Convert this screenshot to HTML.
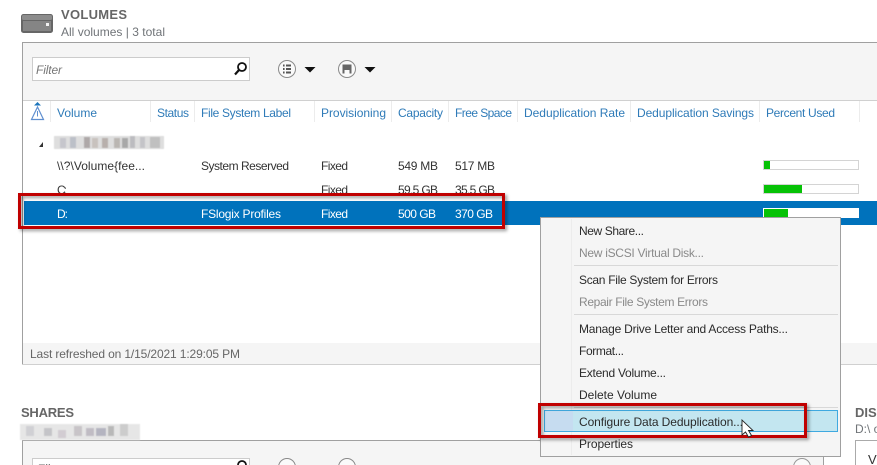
<!DOCTYPE html>
<html><head><meta charset="utf-8"><style>
html,body{margin:0;padding:0;background:#fff}
svg{display:block}
text{font-family:"Liberation Sans",sans-serif;font-size:12px;fill:#333}
.h text,text.h{fill:#2f7bb8}
.m text{fill:#2b2b2b}
</style></head><body>
<svg width="877" height="465" viewBox="0 0 877 465" xmlns="http://www.w3.org/2000/svg" style="width:877px;height:465px;overflow:hidden">
<defs>
<filter id="s" x="-5%" y="-20%" width="110%" height="150%"><feDropShadow dx="2" dy="2" stdDeviation="1.5" flood-color="#000" flood-opacity=".4"/></filter>
<filter id="b"><feGaussianBlur stdDeviation=".6"/></filter>
</defs>
<rect width="877" height="465" fill="#fff"/>

<!-- drive icon -->
<rect x="21" y="14" width="32" height="19" rx="2.5" fill="#666"/>
<rect x="22" y="15" width="30" height="5" rx="1.5" fill="#8c8c8c"/>
<rect x="23" y="21" width="28" height="10" fill="#858585"/>
<rect x="46" y="23" width="3" height="3" fill="#f2f2f2"/>

<text x="61" y="19" font-weight="bold" style="font-size:13px;fill:#666" textLength="66">VOLUMES</text>
<text x="61" y="36" style="fill:#707478" textLength="104">All volumes | 3 total</text>

<!-- volumes panel -->
<rect x="22.5" y="42.5" width="900" height="321.5" fill="#fff" stroke="#a0a0a0"/>
<rect x="23" y="43" width="854" height="57" fill="#f5f5f5"/>
<rect x="23" y="100" width="854" height="1" fill="#d0d0d0"/>
<rect x="23" y="343" width="854" height="21" fill="#f5f5f5"/>
<rect x="32.5" y="57.5" width="217" height="23" fill="#fff" stroke="#ccc"/>
<text x="36" y="74" font-style="italic" style="fill:#777" textLength="26">Filter</text>
<circle cx="242" cy="67" r="4" fill="none" stroke="#111" stroke-width="1.8"/>
<path d="M239 70L235 74.5" stroke="#111" stroke-width="2.2" fill="none"/>
<circle cx="287" cy="69" r="8.5" fill="#fafafa" stroke="#8a8a8a"/>
<path d="M283 65.5h1.6M283 69h1.6M283 72.5h1.6M286 65.5h5M286 69h5M286 72.5h5" stroke="#555" stroke-width="2" fill="none"/>
<path d="M304.5 67h11l-5.500 5.500z" fill="#111"/>
<circle cx="347" cy="69" r="8.5" fill="#fafafa" stroke="#8a8a8a"/>
<path d="M342.500 64.500h9v9h-2v-3.500h-5v3.500h-2z" fill="#666"/>
<path d="M364.500 67h11l-5.500 5.500z" fill="#111"/>

<!-- header -->
<path d="M37.500 102l3.500 3.500h-7z" fill="#1c75bc"/>
<path d="M37.500 107L31.500 119.500h12z" fill="none" stroke="#5f8fd0" stroke-width="1.200"/>
<path d="M37.500 111v5.500" stroke="#5f8fd0" stroke-width="1"/>
<path d="M50.500 101v21M150.500 101v21M194.500 101v21M314.500 101v21M391.500 101v21M448.500 101v21M517.500 101v21M630.500 101v21M759.500 101v21M859.500 101v21" stroke="#ececec"/>
<g class="h">
<text x="57" y="117" textLength="40">Volume</text>
<text x="157" y="117" textLength="32">Status</text>
<text x="201" y="117" textLength="90">File System Label</text>
<text x="321" y="117" textLength="65">Provisioning</text>
<text x="398" y="117" textLength="45">Capacity</text>
<text x="455" y="117" textLength="57">Free Space</text>
<text x="524" y="117" textLength="101">Deduplication Rate</text>
<text x="637" y="117" textLength="117">Deduplication Savings</text>
<text x="766" y="117" textLength="69">Percent Used</text>
</g>

<!-- group blurred -->
<path d="M39 147l4-5v5z" fill="#333"/>
<g filter="url(#b)">
<rect x="54" y="136" width="110" height="13" fill="#dedede"/>
<rect x="60" y="138" width="6" height="10" fill="#c6c6cc"/><rect x="70" y="137" width="6" height="11" fill="#bcc0c8"/>
<rect x="84" y="137" width="6" height="11" fill="#aea8a8"/><rect x="92" y="138" width="6" height="10" fill="#c8c2be"/>
<rect x="102" y="138" width="6" height="10" fill="#b8b0ac"/><rect x="114" y="138" width="6" height="10" fill="#bab6b2"/>
<rect x="122" y="138" width="6" height="10" fill="#a8a8a8"/><rect x="130" y="136" width="5" height="12" fill="#bcbcc0"/>
<rect x="140" y="137" width="5" height="11" fill="#c4c4c8"/><rect x="150" y="137" width="10" height="11" fill="#c0c0c0"/>
</g>

<!-- rows -->
<text x="57" y="170" textLength="88">\\?\Volume{fee...</text>
<text x="201" y="170" textLength="88">System Reserved</text>
<text x="321" y="170" textLength="27">Fixed</text>
<text x="398" y="170" textLength="40">549 MB</text>
<text x="455" y="170" textLength="40">517 MB</text>
<rect x="763.500" y="160.500" width="95" height="9" fill="#fff" stroke="#d4d4d4"/>
<rect x="764" y="161" width="6" height="8" fill="#06c206"/>

<text x="57" y="194" textLength="10">C:</text>
<text x="321" y="194" textLength="27">Fixed</text>
<text x="398" y="194" textLength="40">59.5 GB</text>
<text x="455" y="194" textLength="40">35.5 GB</text>
<rect x="763.500" y="184.500" width="95" height="9" fill="#fff" stroke="#d4d4d4"/>
<rect x="764" y="185" width="38" height="8" fill="#06c206"/>

<rect x="24" y="201" width="853" height="24" fill="#0072bc"/>
<text x="57" y="218" style="fill:#fff" textLength="11">D:</text>
<text x="201" y="218" style="fill:#fff" textLength="80">FSlogix Profiles</text>
<text x="321" y="218" style="fill:#fff" textLength="27">Fixed</text>
<text x="398" y="218" style="fill:#fff" textLength="38">500 GB</text>
<text x="455" y="218" style="fill:#fff" textLength="38">370 GB</text>
<rect x="763" y="208" width="96" height="10" fill="#fff"/>
<rect x="764" y="209" width="24" height="9" fill="#06c206"/>

<text x="30" y="358" style="fill:#666" textLength="210">Last refreshed on 1/15/2021 1:29:05 PM</text>

<!-- shares -->
<text x="21" y="417" font-weight="bold" style="font-size:13px;fill:#666" textLength="53">SHARES</text>
<path d="M22.500 465V440.500H823.500V465" fill="#fff" stroke="#a0a0a0"/>
<rect x="23" y="441" width="800" height="24" fill="#f5f5f5"/>
<g filter="url(#b)">
<rect x="20" y="424" width="120" height="16" fill="#e6e6e6"/>
<rect x="26" y="426" width="8" height="10" fill="#d0d0d4"/><rect x="44" y="428" width="8" height="8" fill="#c4c4c8"/>
<rect x="58" y="430" width="8" height="8" fill="#d2ccd2"/><rect x="74" y="426" width="8" height="10" fill="#c8c4c8"/>
<rect x="86" y="428" width="8" height="8" fill="#c0bcc4"/><rect x="96" y="428" width="10" height="8" fill="#b4b4c0"/>
<rect x="108" y="426" width="6" height="10" fill="#b8b8b8"/><rect x="120" y="424" width="8" height="12" fill="#cccccc"/>
</g>
<rect x="32.500" y="458.500" width="217" height="20" fill="#fff" stroke="#ccc"/>
<text x="37" y="473" font-style="italic" style="fill:#666">Filter</text>
<circle cx="242" cy="465" r="4" fill="none" stroke="#111" stroke-width="1.800"/>
<circle cx="287" cy="467" r="8.500" fill="#fafafa" stroke="#8a8a8a"/>
<circle cx="347" cy="467" r="8.500" fill="#fafafa" stroke="#8a8a8a"/>
<circle cx="802" cy="467" r="8.500" fill="#fafafa" stroke="#999"/>

<!-- disks -->
<text x="855" y="417" font-weight="bold" style="font-size:13px;fill:#666">DISKS</text>
<text x="855" y="433" style="fill:#707478">D:\ on</text>
<rect x="855.500" y="440.500" width="40" height="40" fill="#fff" stroke="#aaa"/>
<text x="868" y="464" style="font-size:13px">V</text>

<!-- red box 1 -->
<rect x="19.500" y="194.500" width="484" height="33" fill="none" stroke="#c00000" stroke-width="3" filter="url(#s)"/>

<!-- context menu -->
<rect x="540.500" y="217.500" width="300" height="239" fill="#f5f5f5" stroke="#a0a0a0"/>
<path d="M571.500 219v236" stroke="#ececec"/>
<path d="M574 265.500h264M574 314.500h264M574 407.500h264" stroke="#d8d8d8"/>
<g class="m">
<text x="579" y="235" textLength="65">New Share...</text>
<text x="579" y="257" style="fill:#8a8a8a" textLength="125">New iSCSI Virtual Disk...</text>
<text x="579" y="284" textLength="139">Scan File System for Errors</text>
<text x="579" y="306" style="fill:#8a8a8a" textLength="129">Repair File System Errors</text>
<text x="579" y="333" textLength="209">Manage Drive Letter and Access Paths...</text>
<text x="579" y="355" textLength="45">Format...</text>
<text x="579" y="377" textLength="87">Extend Volume...</text>
<text x="579" y="399" textLength="78">Delete Volume</text>
<rect x="544.500" y="410.500" width="293" height="21" fill="#c3e6f0" stroke="#3fa9e0"/>
<rect x="545" y="411" width="28" height="20" fill="#c6dcf0"/>
<text x="579" y="426" textLength="164">Configure Data Deduplication...</text>
<text x="579" y="448" textLength="54">Properties</text>
</g>

<!-- red box 2 -->
<rect x="539.500" y="404.500" width="266" height="32" fill="none" stroke="#c00000" stroke-width="3" filter="url(#s)"/>

<!-- cursor -->
<path d="M742 420V435l3.500-3 3 5 3-1.500-3-5h4.500z" fill="#fff" stroke="#222" stroke-width=".9"/>
</svg>
</body></html>
